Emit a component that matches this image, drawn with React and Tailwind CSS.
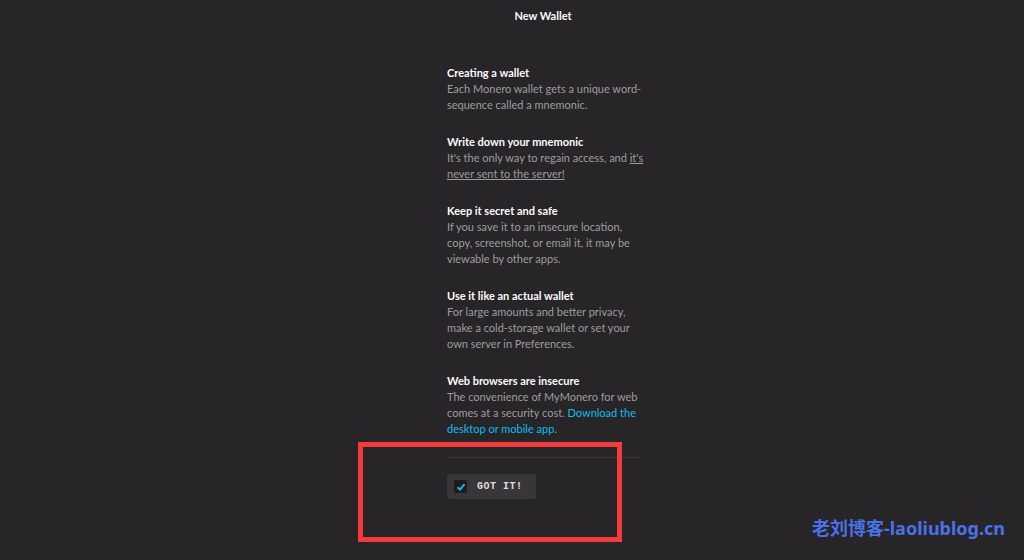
import React from "react";

const sections = [
  {
    title: "Creating a wallet",
    lines: ["Each Monero wallet gets a unique word-", "sequence called a mnemonic."],
  },
  {
    title: "Write down your mnemonic",
    lines: [
      <>
        It's the only way to regain access, and <span className="underline">it's</span>
      </>,
      <span className="underline">never sent to the server!</span>,
    ],
  },
  {
    title: "Keep it secret and safe",
    lines: ["If you save it to an insecure location,", "copy, screenshot, or email it, it may be", "viewable by other apps."],
  },
  {
    title: "Use it like an actual wallet",
    lines: ["For large amounts and better privacy,", "make a cold-storage wallet or set your", "own server in Preferences."],
  },
  {
    title: "Web browsers are insecure",
    lines: [
      "The convenience of MyMonero for web",
      <>
        comes at a security cost. <span className="text-[#11bbec]">Download the</span>
      </>,
      <>
        <span className="text-[#11bbec]">desktop or mobile app</span>.
      </>,
    ],
  },
];

const App = () => {
  return (
    <div className="relative w-[1024px] h-[560px] overflow-hidden bg-[#272528] font-['Lato','Noto_Sans',sans-serif]">
      <div className="pt-[8px] pl-[62px] text-center text-[11px] font-bold text-[#fcfbfc] leading-[16px]">
        New Wallet
      </div>

      <div className="ml-[447px] w-[193px] mt-[41px]">
        <div className="flex flex-col gap-[21px]">
          {sections.map((s) => (
            <div key={s.title} className="text-[11px] leading-[16px]">
              <p className="font-bold text-[#fcfbfc]">{s.title}</p>
              {s.lines.map((l, i) => (
                <p key={i} className="whitespace-nowrap text-[#9e9c9e]">
                  {l}
                </p>
              ))}
            </div>
          ))}
        </div>

        <div className="mt-[20px] h-px bg-[#383638]" />

        <div className="mt-[16px]">
          <button className="flex items-center h-[25px] w-[89px] rounded-[3px] bg-[#383638] pl-[7px]">
            <span className="flex items-center justify-center w-[13px] h-[13px] rounded-[2px] bg-[#1d1b1d]">
              <svg width="10" height="10" viewBox="0 0 10 10">
                <path d="M1.5 5.2 L4 7.6 L8.6 2.2" fill="none" stroke="#11bbec" strokeWidth="2" />
              </svg>
            </span>
            <span className="ml-[10px] font-['Liberation_Mono',monospace] text-[10px] font-bold tracking-[0.5px] text-[#dfdedf]">
              GOT IT!
            </span>
          </button>
        </div>
      </div>

      <div className="absolute left-[358px] top-[442px] w-[264px] h-[100px] border-[5px] border-[#f43a3a]" />

      <div className="absolute left-[812px] top-[516px] text-[18px] font-bold leading-[24px] text-[#4a72e6] font-['Noto_Sans','Noto_Sans_CJK_SC',sans-serif]">
        老刘博客-laoliublog.cn
      </div>
    </div>
  );
};

export default App;
